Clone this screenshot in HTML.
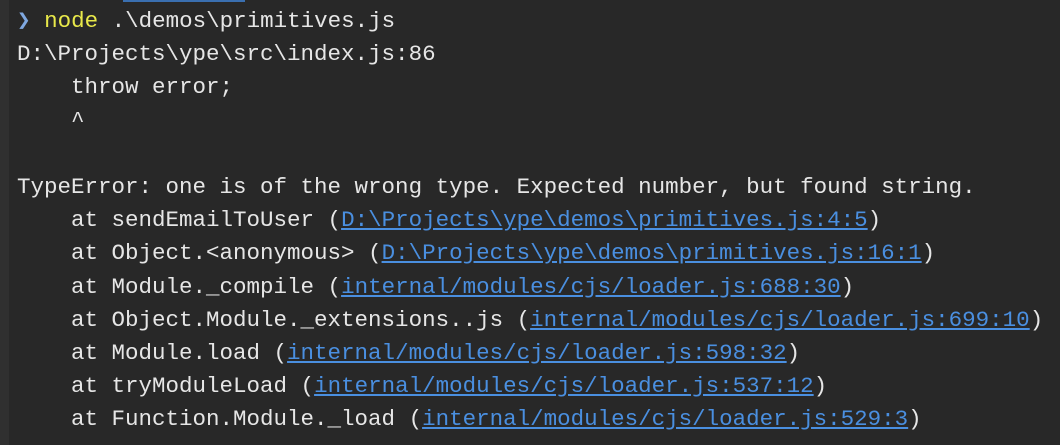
<!DOCTYPE html>
<html><head><style>
html,body{margin:0;padding:0;width:1060px;height:445px;overflow:hidden;background:#282828;}
.strip{position:absolute;left:0;top:0;width:9px;height:445px;background:#303030;}
.topline{position:absolute;left:123px;top:0;width:122px;height:2px;background:#3a6fb0;}
pre{position:absolute;left:17px;top:5px;margin:0;font-family:"Liberation Mono","DejaVu Sans Mono",monospace;font-size:22.5px;line-height:33.2px;color:#e6e6e6;}
.y{color:#e8e84a}.p{color:#7fa8e0}
a{color:#4a8fe0;text-decoration:underline;}
</style></head><body>
<div class="strip"></div><div class="topline"></div>
<pre><span class="p">❯</span> <span class="y">node</span> .\demos\primitives.js
D:\Projects\ype\src\index.js:86
    throw error;
    ^

TypeError: one is of the wrong type. Expected number, but found string.
    at sendEmailToUser (<a>D:\Projects\ype\demos\primitives.js:4:5</a>)
    at Object.&lt;anonymous&gt; (<a>D:\Projects\ype\demos\primitives.js:16:1</a>)
    at Module._compile (<a>internal/modules/cjs/loader.js:688:30</a>)
    at Object.Module._extensions..js (<a>internal/modules/cjs/loader.js:699:10</a>)
    at Module.load (<a>internal/modules/cjs/loader.js:598:32</a>)
    at tryModuleLoad (<a>internal/modules/cjs/loader.js:537:12</a>)
    at Function.Module._load (<a>internal/modules/cjs/loader.js:529:3</a>)</pre>
</body></html>
